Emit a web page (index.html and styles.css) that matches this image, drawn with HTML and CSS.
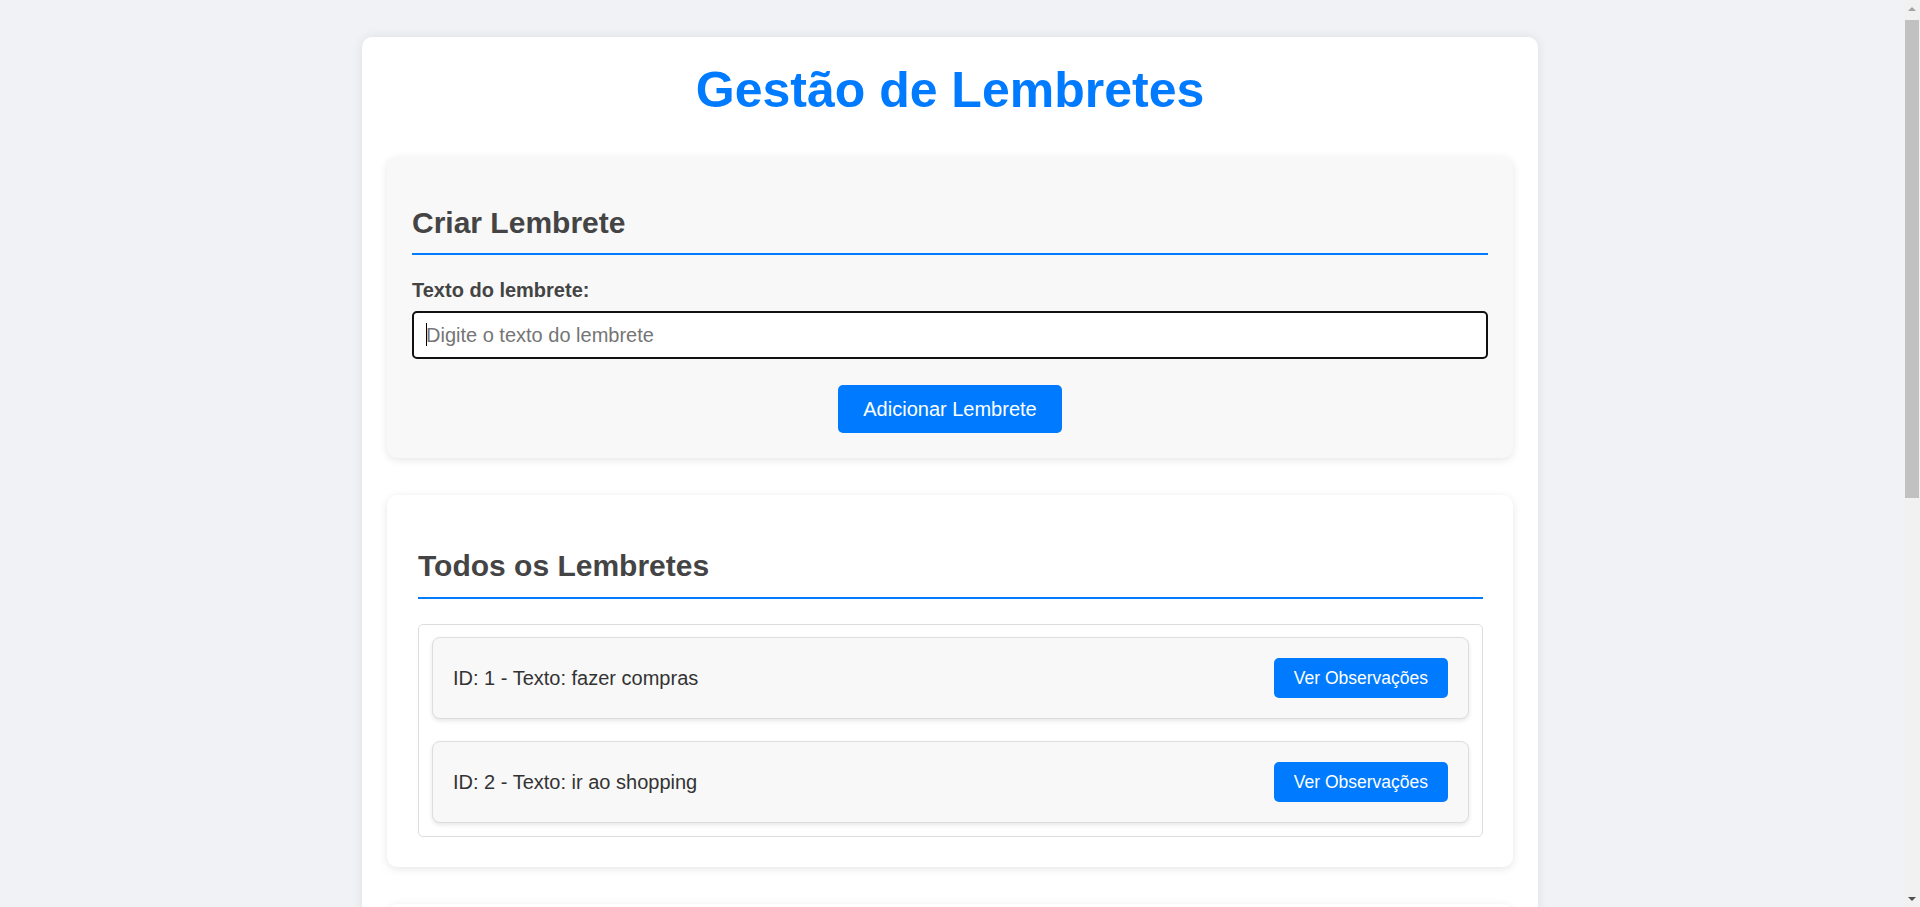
FILE: index.html
```html
<!DOCTYPE html>
<html lang="pt-BR">
<head>
<meta charset="utf-8">
<title>Gestão de Lembretes</title>
<link rel="stylesheet" href="styles.css">
</head>
<body>
<div class="container">
  <h1 class="title">Gestão de Lembretes</h1>

  <section class="card card-form">
    <h2 class="section-title">Criar Lembrete</h2>
    <label class="field-label" for="texto">Texto do lembrete:</label>
    <div class="input-wrap">
      <input id="texto" class="text-input" type="text" placeholder="Digite o texto do lembrete">
      <span class="caret"></span>
    </div>
    <div class="actions">
      <button class="btn btn-primary" type="button">Adicionar Lembrete</button>
    </div>
  </section>

  <section class="card card-list">
    <h2 class="section-title">Todos os Lembretes</h2>
    <ul class="reminder-list">
      <li class="reminder-item">
        <span class="reminder-text">ID: 1 - Texto: fazer compras</span>
        <button class="btn btn-small" type="button">Ver Observações</button>
      </li>
      <li class="reminder-item">
        <span class="reminder-text">ID: 2 - Texto: ir ao shopping</span>
        <button class="btn btn-small" type="button">Ver Observações</button>
      </li>
    </ul>
  </section>

  <section class="card card-list card-obs">
    <h2 class="section-title">Observações</h2>
    <p class="empty-note">Selecione um lembrete para ver suas observações.</p>
  </section>
</div>

<div class="scrollbar" aria-hidden="true">
  <div class="sb-button"><span class="sb-arrow sb-up"></span></div>
  <div class="sb-track"><div class="sb-thumb"></div></div>
  <div class="sb-button"><span class="sb-arrow sb-down"></span></div>
</div>
</body>
</html>
```

FILE: styles.css
```css
* {
  box-sizing: border-box;
}

html, body {
  margin: 0;
  padding: 0;
}

body {
  background: #f0f2f5;
  font-family: "Liberation Sans", Arial, Helvetica, sans-serif;
  font-size: 20px;
  line-height: 23px;
  color: #333;
  padding: 37px 20px 37px 0;
}

.container {
  width: 1176px;
  margin: 0 auto;
  background: #ffffff;
  border-radius: 10px;
  box-shadow: 0 0 12px rgba(0, 0, 0, 0.08);
  padding: 25px;
}

.title {
  margin: 0 0 38px;
  text-align: center;
  color: #007bff;
  font-size: 50px;
  line-height: 57px;
  font-weight: bold;
}

.card {
  border-radius: 10px;
  box-shadow: 0 2px 8px rgba(0, 0, 0, 0.1);
}

.card-form {
  background: #f8f8f8;
  padding: 25px;
}

.card-list {
  background: #ffffff;
  margin-top: 37px;
  padding: 31px 30px 30px 31px;
}

.section-title {
  margin: 24px 0 24px;
  font-size: 30px;
  line-height: 34px;
  font-weight: bold;
  color: #444;
  padding-bottom: 13px;
  border-bottom: 2px solid #007bff;
}

.card-list .section-title {
  margin: 23px 0 25px;
  padding-bottom: 14px;
}

.field-label {
  display: block;
  font-weight: bold;
  color: #444;
  margin-bottom: 9px;
}

.input-wrap {
  position: relative;
}

.text-input {
  display: block;
  width: 100%;
  height: 48px;
  border: 2px solid #111;
  border-radius: 5px;
  padding: 0 12px;
  font-family: inherit;
  font-size: 20px;
  color: #333;
  background: #fff;
  outline: none;
}

.text-input::placeholder {
  color: #757575;
}

.caret {
  position: absolute;
  left: 14px;
  top: 12px;
  width: 1px;
  height: 23px;
  background: #000;
}

.actions {
  display: flex;
  justify-content: center;
  margin-top: 26px;
}

.btn {
  border: none;
  background: #007bff;
  color: #fff;
  font-family: inherit;
  border-radius: 5px;
  cursor: pointer;
}

.btn-primary {
  font-size: 20px;
  line-height: 24px;
  padding: 12px 25px;
}

.reminder-list {
  list-style: none;
  margin: 0;
  padding: 12px 13px 13px;
  border: 1px solid #dddddd;
  border-radius: 5px;
  display: flex;
  flex-direction: column;
  gap: 22px;
}

.reminder-item {
  display: flex;
  align-items: center;
  justify-content: space-between;
  padding: 20px;
  background: #f8f8f8;
  border: 1px solid #dddddd;
  border-radius: 8px;
  box-shadow: 0 2px 4px rgba(0, 0, 0, 0.1);
}

.reminder-text {
  color: #333;
}

.btn-small {
  font-size: 17.5px;
  line-height: 20px;
  padding: 10px 20px;
}

.card-obs {
  min-height: 688px;
}

.empty-note {
  margin: 0;
  color: #666;
}

/* browser scrollbar (drawn over the page edge) */
.scrollbar {
  position: fixed;
  top: 0;
  right: 0;
  width: 17px;
  height: 100vh;
  background: #f1f1f1;
  display: flex;
  flex-direction: column;
}

.sb-button {
  height: 17px;
  flex: 0 0 17px;
  display: flex;
  align-items: center;
  justify-content: center;
}

.sb-track {
  flex: 1;
  padding: 3px 1px 0 2px;
}

.sb-thumb {
  height: 478px;
  background: #c1c1c1;
}

.sb-arrow {
  width: 0;
  height: 0;
  border-left: 4px solid transparent;
  border-right: 4px solid transparent;
}

.sb-up {
  border-bottom: 4px solid #a3a3a3;
}

.sb-down {
  border-top: 4px solid #505050;
}
```
